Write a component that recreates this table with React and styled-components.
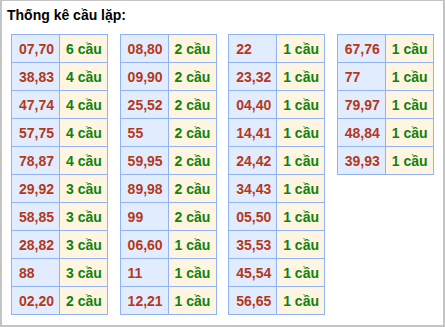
import React from "react";
import styled, { createGlobalStyle } from "styled-components";

const Global = createGlobalStyle`
  html, body { margin: 0; padding: 0; background: #fff; }
  body { font-family: "Liberation Sans", Arial, sans-serif; }
`;

const Frame = styled.div`
  box-sizing: border-box;
  width: 445px;
  height: 327px;
  border: 2px solid #c4c4c4;
  border-top-width: 1px;
  background: #fff;
  padding: 6px 0 0 5px;
  overflow: hidden;
`;

const Title = styled.div`
  font-size: 14px;
  line-height: 16px;
  font-weight: bold;
  color: #000;
`;

const Tables = styled.div`
  display: flex;
  align-items: flex-start;
  gap: 11.6px;
  margin: 11px 0 0 4px;
`;

const Table = styled.div`
  display: grid;
  grid-template-columns: 48px 48px;
  grid-auto-rows: 28px;
  border-left: 1px solid #8fb3f5;
  border-top: 1px solid #8fb3f5;
`;

const Cell = styled.div`
  box-sizing: border-box;
  display: flex;
  align-items: center;
  padding-left: ${(p) => (p.$kind === "num" ? "7px" : "6px")};
  border-right: 1px solid #8fb3f5;
  border-bottom: 1px solid #8fb3f5;
  background: ${(p) => (p.$kind === "num" ? "#e1edff" : "#fff5e1")};
  color: ${(p) => (p.$kind === "num" ? "#b5381c" : "#0f820f")};
  font-size: 14px;
  font-weight: bold;
  white-space: nowrap;
`;

const data = [
  [
    ["07,70", 6], ["38,83", 4], ["47,74", 4], ["57,75", 4], ["78,87", 4],
    ["29,92", 3], ["58,85", 3], ["28,82", 3], ["88", 3], ["02,20", 2],
  ],
  [
    ["08,80", 2], ["09,90", 2], ["25,52", 2], ["55", 2], ["59,95", 2],
    ["89,98", 2], ["99", 2], ["06,60", 1], ["11", 1], ["12,21", 1],
  ],
  [
    ["22", 1], ["23,32", 1], ["04,40", 1], ["14,41", 1], ["24,42", 1],
    ["34,43", 1], ["05,50", 1], ["35,53", 1], ["45,54", 1], ["56,65", 1],
  ],
  [
    ["67,76", 1], ["77", 1], ["79,97", 1], ["48,84", 1], ["39,93", 1],
  ],
];

export default function App() {
  return (
    <>
      <Global />
      <Frame>
        <Title>Thống kê cầu lặp:</Title>
        <Tables>
          {data.map((col, i) => (
            <Table key={i}>
              {col.map(([n, c]) => (
                <React.Fragment key={n}>
                  <Cell $kind="num">{n}</Cell>
                  <Cell $kind="count">{c} cầu</Cell>
                </React.Fragment>
              ))}
            </Table>
          ))}
        </Tables>
      </Frame>
    </>
  );
}
